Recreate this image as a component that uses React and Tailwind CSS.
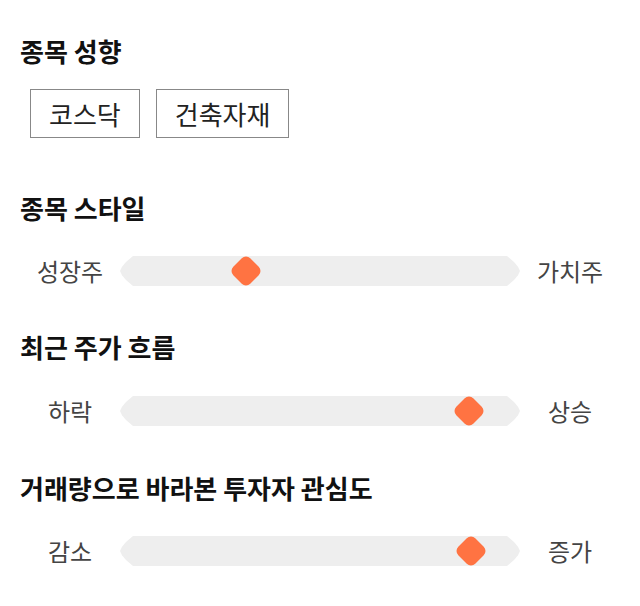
import React from 'react';

const sliders = [
  { title: '종목 스타일', left: '성장주', right: '가치주', pos: 126 },
  { title: '최근 주가 흐름', left: '하락', right: '상승', pos: 349 },
  { title: '거래량으로 바라본 투자자 관심도', left: '감소', right: '증가', pos: 351 },
];

const Slider = ({ left, right, pos }) => (
  <div className="flex items-center h-[30px]">
    <div className="w-[100px] text-center text-[24px] text-[#444]">{left}</div>
    <div className="relative flex-1 h-[30px]">
      <div className="absolute inset-0 bg-[#eeeeee] [clip-path:polygon(13px_0,calc(100%_-_13px)_0,calc(100%_-_6px)_20%,calc(100%_-_2px)_36%,100%_50%,calc(100%_-_2px)_64%,calc(100%_-_6px)_80%,calc(100%_-_13px)_100%,13px_100%,6px_80%,2px_64%,0_50%,2px_36%,6px_20%)]" />
      <div
        className="absolute top-[3px] w-6 h-6 -ml-3 rotate-45 rounded-[6px] bg-[#ff7342]"
        style={{ left: pos }}
      />
    </div>
    <div className="w-[100px] text-center text-[24px] text-[#444]">{right}</div>
  </div>
);

const App = () => {
  const margins = [
    { head: 'mt-[54px]', slider: 'mt-[32px]' },
    { head: 'mt-[45px]', slider: 'mt-[33px]' },
    { head: 'mt-[46px]', slider: 'mt-[32px]' },
  ];

  return (
    <div className="w-[640px] h-[606px] bg-white px-5 pt-[35px] font-['Noto_Sans_CJK_KR',sans-serif]">
      {/* 종목 성향 */}
      <h2 className="text-[26px] leading-[32px] font-bold text-[#111]">종목 성향</h2>
      <div className="flex gap-4 ml-[10px] mt-[22px]">
        {['코스닥', '건축자재'].map((tag) => (
          <div
            key={tag}
            className="h-[49px] px-[18px] flex items-center border border-[#888] text-[26px] text-[#222]"
          >
            {tag}
          </div>
        ))}
      </div>

      {sliders.map((s, i) => (
        <div key={s.title}>
          <h2 className={`${margins[i].head} text-[26px] leading-[32px] font-bold text-[#111]`}>{s.title}</h2>
          <div className={margins[i].slider}>
            <Slider left={s.left} right={s.right} pos={s.pos} />
          </div>
        </div>
      ))}
    </div>
  );
};

export default App;
